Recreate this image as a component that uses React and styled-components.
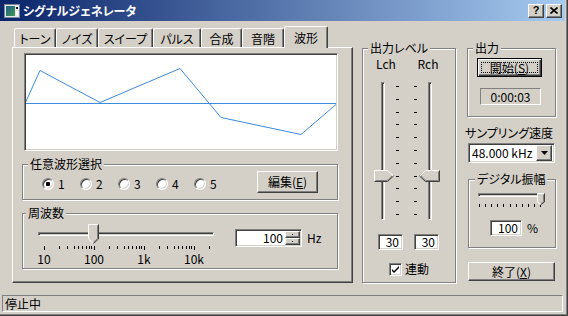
import React from "react";
import styled, { createGlobalStyle } from "styled-components";

const FACE = "#d4d0c8";
const HILITE = "#ffffff";
const SHADOW = "#808080";
const DARK = "#404040";
const WAVE_BLUE = "#3b8be0";

const GlobalStyle = createGlobalStyle`
  html, body { margin: 0; padding: 0; background: ${FACE}; }
  body {
    font-family: "Noto Sans CJK JP", "Noto Sans", sans-serif;
    font-size: 12px;
    color: #000;
  }
  * { box-sizing: border-box; }
`;

const raised = `
  border: 1px solid;
  border-color: ${HILITE} ${DARK} ${DARK} ${HILITE};
  box-shadow: inset -1px -1px 0 ${SHADOW};
`;
const sunken = `
  border: 1px solid;
  border-color: ${SHADOW} ${HILITE} ${HILITE} ${SHADOW};
  box-shadow: inset 1px 1px 0 ${DARK}, inset -1px -1px 0 ${FACE};
`;

const TABS = [
  { label: "トーン", w: 42 },
  { label: "ノイズ", w: 42 },
  { label: "スイープ", w: 55 },
  { label: "パルス", w: 48 },
  { label: "合成", w: 41 },
  { label: "音階", w: 42 },
  { label: "波形", w: 44, active: true },
];

const WAVE = [[-1, 48], [14, 15], [74, 47], [154, 13], [195, 62], [275, 79], [310, 49]];

const FREQ_TICKS = [];
[10, 100, 1000].forEach((d) => {
  for (let k = 1; k <= 9; k++) FREQ_TICKS.push(d * k);
});
FREQ_TICKS.push(10000, 20000);
const freqX = (f) => 5.5 + 50 * Math.log10(f / 10);
const FREQ_LABELS = [
  { f: 10, text: "10" },
  { f: 100, text: "100" },
  { f: 1000, text: "1k" },
  { f: 10000, text: "10k" },
];

const LEVEL_TICKS = Array.from({ length: 11 }, (_, i) => 6 + 12.8 * i);
const AMP_TICKS = Array.from({ length: 11 }, (_, i) => 1 + 6.1 * i);

const Window = styled.div`
  width: 568px;
  height: 316px;
  display: flex;
  flex-direction: column;
  background: ${FACE};
  border-right: 1px solid ${DARK};
  border-bottom: 1px solid ${DARK};
  box-shadow: inset -1px -1px 0 ${SHADOW};
  padding: 0 2px 2px 0;
  font-feature-settings: "palt";
  line-height: 14px;
  overflow: hidden;
`;

const TitleBar = styled.div`
  height: 21px;
  flex: none;
  display: flex;
  align-items: center;
  padding: 0 3px 0 4px;
  background: linear-gradient(to right, #0a246a, #a6caf0);
  color: #fff;
`;

const TitleText = styled.span`
  flex: 1;
  margin-left: 3px;
  font-weight: bold;
  font-size: 12px;
  white-space: nowrap;
`;

const CapButton = styled.div`
  width: 16px;
  height: 14px;
  margin-left: ${(p) => p.$gap || 0}px;
  background: ${FACE};
  ${raised}
  display: flex;
  align-items: center;
  justify-content: center;
  color: #000;
  font: bold 11px "Liberation Sans", sans-serif;
  line-height: 11px;
`;

const Body = styled.div`
  flex: 1;
  min-height: 0;
  display: flex;
  align-items: flex-start;
  padding: 5px 0 0 12px;
`;

const TabsColumn = styled.div`
  width: 341px;
  flex: none;
`;

const TabRow = styled.div`
  position: relative;
  z-index: 1;
  height: 21px;
  display: flex;
  align-items: flex-end;
  padding-left: 2px;
`;

const Tab = styled.div`
  width: ${(p) => p.$w}px;
  height: ${(p) => (p.$active ? 22 : 19)}px;
  margin-bottom: ${(p) => (p.$active ? -1 : 0)}px;
  background: ${FACE};
  border: 1px solid;
  border-bottom: none;
  border-color: ${HILITE} ${DARK} transparent ${HILITE};
  border-radius: 2px 2px 0 0;
  box-shadow: inset -1px 0 0 ${SHADOW};
  display: flex;
  align-items: center;
  justify-content: center;
  padding-top: ${(p) => (p.$active ? 0 : 2)}px;
  white-space: nowrap;
`;

const TabPanel = styled.div`
  height: 236px;
  border: 1px solid;
  border-color: ${HILITE} ${DARK} ${DARK} ${HILITE};
  box-shadow: inset -1px -1px 0 ${SHADOW};
  padding: 5px 0 0 9px;
  display: flex;
  flex-direction: column;
`;

const WaveBox = styled.div`
  width: 314px;
  height: 98px;
  margin-left: 2px;
  padding: 1px;
  background: #fff;
  ${sunken}
  svg { display: block; }
`;

const Group = styled.fieldset`
  margin: ${(p) => p.$mt || 0}px 0 0 ${(p) => p.$ml || 0}px;
  padding: 0;
  min-width: 0;
  width: ${(p) => p.$w}px;
  height: ${(p) => p.$h}px;
  flex: none;
  border: 1px solid ${SHADOW};
  box-shadow: inset 1px 1px 0 ${HILITE}, 1px 1px 0 ${HILITE};
`;

const Caption = styled.legend`
  margin-left: ${(p) => (p.$ml === undefined ? 5 : p.$ml)}px;
  padding: 0 2px;
  height: 12px;
  line-height: 12px;
  background: ${FACE};
  white-space: nowrap;
`;

const RadioRow = styled.div`
  display: flex;
  align-items: center;
  height: 22px;
  margin-top: 1px;
  padding: 0 19px;
`;

const RadioItem = styled.label`
  width: 38px;
  flex: none;
  display: flex;
  align-items: center;
  margin-top: 4px;
  gap: 4px;
`;

const RadioMark = styled.span`
  position: relative;
  width: 12px;
  height: 12px;
  flex: none;
  border-radius: 50%;
  background: #fff;
  border: 1px solid;
  border-color: ${SHADOW} ${HILITE} ${HILITE} ${SHADOW};
  box-shadow: inset 1px 1px 0 ${DARK}, inset -1px -1px 0 ${FACE};
  &::after {
    content: "";
    display: ${(p) => (p.$on ? "block" : "none")};
    position: absolute;
    left: 3px;
    top: 3px;
    width: 4px;
    height: 4px;
    border-radius: 1px;
    background: #000;
  }
`;

const PushButton = styled.div`
  width: ${(p) => p.$w}px;
  height: ${(p) => p.$h}px;
  margin: ${(p) => p.$m || 0};
  flex: none;
  background: ${FACE};
  display: flex;
  align-items: center;
  justify-content: center;
  white-space: nowrap;
  ${(p) =>
    p.$default
      ? `
    border: 1px solid #000;
    box-shadow: inset 1px 1px 0 ${HILITE}, inset -1px -1px 0 ${DARK}, inset -2px -2px 0 ${SHADOW};
    outline: 1px dotted #000;
    outline-offset: -5px;
  `
      : raised}
`;

const Key = styled.span`
  text-decoration: underline;
  text-underline-offset: 1px;
`;

const FreqRow = styled.div`
  display: flex;
  align-items: flex-start;
  margin-top: 5px;
  padding-left: 15px;
`;

const HSlider = styled.div`
  position: relative;
  width: ${(p) => p.$w}px;
  height: ${(p) => p.$h}px;
  flex: none;
  svg { display: block; }
`;

const HGroove = styled.div`
  width: ${(p) => p.$w}px;
  height: 4px;
  margin-top: ${(p) => p.$mt}px;
  ${sunken}
`;

const TickStrip = styled.svg`
  margin-top: ${(p) => p.$mt}px;
`;

const TickLabels = styled.div`
  position: relative;
  height: 12px;
  margin-top: 3px;
  line-height: 12px;
`;

const TickLabel = styled.span`
  position: absolute;
  top: 0;
  transform: translateX(-50%);
`;

const ThumbSpot = styled.svg`
  position: absolute;
  top: ${(p) => p.$top}px;
  left: ${(p) => p.$left}px;
`;

const SpinBox = styled.div`
  width: 67px;
  height: 18px;
  margin: 5px 0 0 21px;
  display: flex;
  background: #fff;
  ${sunken}
  padding: 1px;
`;

const SpinValue = styled.span`
  flex: 1;
  text-align: right;
  padding-right: 2px;
  line-height: 14px;
`;

const SpinButtons = styled.div`
  width: 15px;
  display: flex;
  flex-direction: column;
`;

const SpinBtn = styled.div`
  height: 7px;
  background: ${FACE};
  ${raised}
  display: flex;
  align-items: center;
  justify-content: center;
  &::after {
    content: "";
    width: 1px;
    height: 1px;
    background: #000;
  }
`;

const UnitText = styled.span`
  margin: ${(p) => p.$m};
  line-height: 14px;
`;

const ChannelRow = styled.div`
  display: flex;
  gap: 18px;
  margin: 3px 0 0 11px;
  height: 14px;
`;

const ChannelName = styled.span`
  width: 24px;
  text-align: center;
`;

const FaderRow = styled.div`
  display: flex;
  height: 142px;
  margin: 9px 0 0 11px;
  svg { display: block; }
`;

const VSlider = styled.div`
  position: relative;
  width: ${(p) => p.$w}px;
  height: 142px;
  flex: none;
`;

const VGroove = styled.div`
  width: 4px;
  height: 138px;
  margin: 2px 0 0 ${(p) => p.$x}px;
  ${sunken}
`;

const ValueRow = styled.div`
  display: flex;
  align-items: center;
  gap: ${(p) => p.$gap || 0}px;
  margin: ${(p) => p.$m};
`;

const ValueBox = styled.div`
  width: ${(p) => p.$w}px;
  height: 16px;
  background: #fff;
  ${sunken}
  text-align: right;
  padding-right: 3px;
  line-height: 13px;
`;

const CheckRow = styled.label`
  display: flex;
  align-items: center;
  gap: 3px;
  margin: 12px 0 0 26px;
`;

const CheckBox = styled.span`
  width: 13px;
  height: 13px;
  background: #fff;
  ${sunken}
  display: flex;
  align-items: center;
  justify-content: center;
`;

const SideColumn = styled.div`
  width: 89px;
  flex: none;
  margin: 16px 0 0 11px;
  display: flex;
  flex-direction: column;
  align-items: flex-start;
`;

const TimeBox = styled.div`
  width: 61px;
  height: 17px;
  margin: 11px 0 0 12px;
  border: 1px solid;
  border-color: ${SHADOW} ${HILITE} ${HILITE} ${SHADOW};
  display: flex;
  align-items: center;
  justify-content: center;
  line-height: 14px;
`;

const FieldLabel = styled.div`
  margin: 9px 0 0 -2px;
  white-space: nowrap;
`;

const Select = styled.div`
  width: 87px;
  height: 20px;
  margin: 3px 0 0 1px;
  display: flex;
  align-items: center;
  background: #fff;
  ${sunken}
  padding: 2px;
`;

const SelectValue = styled.span`
  flex: 1;
  padding-left: 1px;
  white-space: nowrap;
`;

const DropButton = styled.div`
  width: 16px;
  height: 16px;
  background: ${FACE};
  ${raised}
  display: flex;
  align-items: center;
  justify-content: center;
`;

const StatusBar = styled.div`
  height: 17px;
  margin: auto 2px 1px 2px;
  border: 1px solid;
  border-color: ${SHADOW} ${HILITE} ${HILITE} ${SHADOW};
  padding-left: 2px;
  line-height: 15px;
`;

function AppIcon() {
  return (
    <svg width="16" height="14" viewBox="0 0 16 14">
      <defs>
        <linearGradient id="ic" x1="0" y1="0" x2="1" y2="1">
          <stop offset="0" stopColor="#1d5d8a" />
          <stop offset="1" stopColor="#3e9a52" />
        </linearGradient>
      </defs>
      <rect x="0.5" y="0.5" width="15" height="13" fill="#e8e8e8" stroke="#7a8a9a" />
      <rect x="2" y="2" width="9" height="10" fill="url(#ic)" />
      <rect x="12" y="3" width="2" height="2" fill="#222" />
      <rect x="12" y="7" width="2" height="4" fill="#fff" />
    </svg>
  );
}

function CloseGlyph() {
  return (
    <svg width="8" height="7" viewBox="0 0 8 7">
      <path d="M0.5 0.5 L7.5 6.5 M7.5 0.5 L0.5 6.5" stroke="#000" strokeWidth="1.6" />
    </svg>
  );
}

function ThumbDown({ w, h, tip, left, top }) {
  const b = h - tip;
  const m = w / 2;
  return (
    <ThumbSpot $left={left} $top={top} width={w} height={h} viewBox={`0 0 ${w} ${h}`}>
      <polygon points={`0.5,0.5 ${w - 0.5},0.5 ${w - 0.5},${b} ${m},${h - 0.5} 0.5,${b}`} fill={FACE} />
      <polyline points={`${m},${h - 0.5} 0.5,${b} 0.5,0.5 ${w - 1},0.5`} fill="none" stroke={HILITE} />
      <polyline points={`${w - 1.5},1.5 ${w - 1.5},${b - 0.5} ${m},${h - 1.5}`} fill="none" stroke={SHADOW} />
      <polyline points={`${w - 0.5},0.5 ${w - 0.5},${b} ${m},${h - 0.5}`} fill="none" stroke={DARK} />
    </ThumbSpot>
  );
}

function ThumbSide({ dir, left, top }) {
  const w = dir === "right" ? 20 : 21;
  const h = 12;
  if (dir === "right") {
    return (
      <ThumbSpot $left={left} $top={top} width={w} height={h} viewBox={`0 0 ${w} ${h}`}>
        <polygon points="0.5,0.5 13.5,0.5 19.5,6 13.5,11.5 0.5,11.5" fill={FACE} />
        <polyline points="0.5,11 0.5,0.5 13.5,0.5 19,5.5" fill="none" stroke={HILITE} />
        <polyline points="18,6 13,10.5 1.5,10.5" fill="none" stroke={SHADOW} />
        <polyline points="19.5,6 13.5,11.5 0.5,11.5" fill="none" stroke={DARK} />
      </ThumbSpot>
    );
  }
  return (
    <ThumbSpot $left={left} $top={top} width={w} height={h} viewBox={`0 0 ${w} ${h}`}>
      <polygon points="0.5,6 6.5,0.5 20.5,0.5 20.5,11.5 6.5,11.5" fill={FACE} />
      <polyline points="1,6 6.5,0.5 20,0.5" fill="none" stroke={HILITE} />
      <polyline points="19.5,1.5 19.5,10.5 7,10.5 2,6" fill="none" stroke={SHADOW} />
      <polyline points="20.5,0.5 20.5,11.5 6.5,11.5 0.5,6" fill="none" stroke={DARK} />
    </ThumbSpot>
  );
}

function WaveDisplay() {
  const pts = WAVE.map(([x, y]) => `${x},${y + 0.5}`).join(" ");
  return (
    <svg width="310" height="94" viewBox="0 0 310 94">
      <line x1="0" y1="48.5" x2="310" y2="48.5" stroke={WAVE_BLUE} />
      <polyline points={pts} fill="none" stroke={WAVE_BLUE} />
    </svg>
  );
}

function FrequencySlider({ value }) {
  const cx = freqX(value);
  return (
    <HSlider $w={176} $h={40}>
      <HGroove $w={176} $mt={8} />
      <TickStrip $mt={10} width="176" height="4">
        {FREQ_TICKS.map((f) => (
          <rect key={f} x={Math.round(freqX(f))} y="0" width="1" height={f === 10 || f === 100 || f === 1000 || f === 10000 ? 4 : 3} fill="#000" />
        ))}
      </TickStrip>
      <TickLabels>
        {FREQ_LABELS.map((l) => (
          <TickLabel key={l.f} style={{ left: freqX(l.f) + 0.5 }}>
            {l.text}
          </TickLabel>
        ))}
      </TickLabels>
      <ThumbDown w={11} h={20} tip={5} left={Math.round(cx - 5.5)} top={0} />
    </HSlider>
  );
}

function LevelTicks() {
  return (
    <svg width="25" height="142">
      {LEVEL_TICKS.map((y) => (
        <g key={y}>
          <rect x="2" y={Math.round(y)} width="3" height="1" fill="#000" />
          <rect x="20" y={Math.round(y)} width="3" height="1" fill="#000" />
        </g>
      ))}
    </svg>
  );
}

export default function App() {
  const level = 30;
  const thumbTop = Math.round(LEVEL_TICKS[10 - level / 10] - 5.5);
  return (
    <>
      <GlobalStyle />
      <Window>
        <TitleBar>
          <AppIcon />
          <TitleText>シグナルジェネレータ</TitleText>
          <CapButton>?</CapButton>
          <CapButton $gap={2}>
            <CloseGlyph />
          </CapButton>
        </TitleBar>
        <Body>
          <TabsColumn>
            <TabRow>
              {TABS.map((t) => (
                <Tab key={t.label} $w={t.w} $active={t.active}>
                  {t.label}
                </Tab>
              ))}
            </TabRow>
            <TabPanel>
              <WaveBox>
                <WaveDisplay />
              </WaveBox>
              <Group $w={316} $h={42} $mt={7}>
                <Caption>任意波形選択</Caption>
                <RadioRow>
                  {[1, 2, 3, 4, 5].map((n) => (
                    <RadioItem key={n}>
                      <RadioMark $on={n === 1} />
                      {n}
                    </RadioItem>
                  ))}
                  <PushButton $w={61} $h={22} $m="0 0 0 auto">
                    編集(<Key>E</Key>)
                  </PushButton>
                </RadioRow>
              </Group>
              <Group $w={316} $h={62} $mt={7}>
                <Caption $ml={3}>周波数</Caption>
                <FreqRow>
                  <FrequencySlider value={100} />
                  <SpinBox>
                    <SpinValue>100</SpinValue>
                    <SpinButtons>
                      <SpinBtn />
                      <SpinBtn />
                    </SpinButtons>
                  </SpinBox>
                  <UnitText $m="7px 0 0 5px">Hz</UnitText>
                </FreqRow>
              </Group>
            </TabPanel>
          </TabsColumn>

          <Group $w={94} $h={241} $mt={16} $ml={9}>
            <Caption>出力レベル</Caption>
            <ChannelRow>
              <ChannelName>Lch</ChannelName>
              <ChannelName>Rch</ChannelName>
            </ChannelRow>
            <FaderRow>
              <VSlider $w={20}>
                <VGroove $x={7} />
                <ThumbSide dir="right" left={0} top={thumbTop} />
              </VSlider>
              <LevelTicks />
              <VSlider $w={21}>
                <VGroove $x={9} />
                <ThumbSide dir="left" left={0} top={thumbTop} />
              </VSlider>
            </FaderRow>
            <ValueRow $gap={11} $m="12px 0 0 15px">
              <ValueBox $w={25}>{level}</ValueBox>
              <ValueBox $w={25}>{level}</ValueBox>
            </ValueRow>
            <CheckRow>
              <CheckBox>
                <svg width="7" height="7" viewBox="0 0 7 7">
                  <path d="M0 3 L2 5 L7 0 L7 2 L2 7 L0 5 Z" fill="#000" />
                </svg>
              </CheckBox>
              連動
            </CheckRow>
          </Group>

          <SideColumn>
            <Group $w={89} $h={75}>
              <Caption>出力</Caption>
              <PushButton $w={65} $h={19} $m="4px 0 0 9px" $default>
                開始(<Key>S</Key>)
              </PushButton>
              <TimeBox>0:00:03</TimeBox>
            </Group>
            <FieldLabel>サンプリング速度</FieldLabel>
            <Select>
              <SelectValue>48.000 kHz</SelectValue>
              <DropButton>
                <svg width="7" height="4" viewBox="0 0 7 4">
                  <polygon points="0,0 7,0 3.5,4" fill="#000" />
                </svg>
              </DropButton>
            </Select>
            <Group $w={88} $h={75} $mt={10} $ml={1}>
              <Caption $ml={6}>デジタル振幅</Caption>
              <HSlider $w={68} $h={19} style={{ margin: "8px 0 0 9px" }}>
                <HGroove $w={67} $mt={4} />
                <TickStrip $mt={7} width="68" height="4">
                  {AMP_TICKS.map((x) => (
                    <rect key={x} x={Math.round(x)} y="0" width="1" height="3" fill="#000" />
                  ))}
                </TickStrip>
                <ThumbDown w={8} h={12} tip={3} left={59} top={0} />
              </HSlider>
              <ValueRow $m="8px 0 0 21px">
                <ValueBox $w={32}>100</ValueBox>
                <UnitText $m="0 0 0 5px">%</UnitText>
              </ValueRow>
            </Group>
            <PushButton $w={87} $h={19} $m="14px 0 0 1px">
              終了(<Key>X</Key>)
            </PushButton>
          </SideColumn>
        </Body>
        <StatusBar>停止中</StatusBar>
      </Window>
    </>
  );
}
